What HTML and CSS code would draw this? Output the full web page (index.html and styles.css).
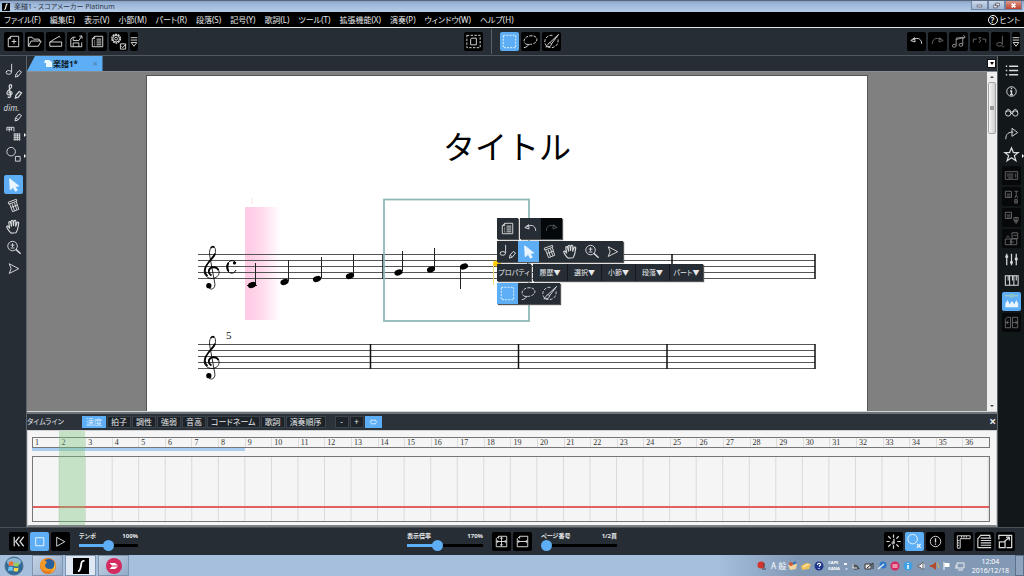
FILE: index.html
```
<!DOCTYPE html>
<html lang="ja">
<head>
<meta charset="UTF-8">
<meta name="viewport" content="width=device-width,initial-scale=1">
<title>楽譜1 - スコアメーカー Platinum</title>
<link rel="stylesheet" href="styles.css">
</head>
<body>
<!-- icon set, 20x20 grid -->
<svg class="defs" aria-hidden="true">
  <symbol id="i-new" viewBox="0 0 20 20"><path d="M7 4.500h8.500v11h-11V7zM7 4.500V7H4.500M10.500 7.500v5M8 10h5"/></symbol>
  <symbol id="i-open" viewBox="0 0 20 20"><path d="M3.500 15V5.500h4l1.500 2h6v2M3.500 15l3-5.500h10.500L14 15z"/></symbol>
  <symbol id="i-scan" viewBox="0 0 20 20"><path d="M4 10.500h12.500v4.500H4zM4 10.500L14 4.500l1 1.500"/></symbol>
  <symbol id="i-save" viewBox="0 0 20 20"><path d="M9 5.500H6l-2 2v8h11.500V11M6.500 15.500v-4h6v4M6.500 6v3h4M10 8.500l2 1 3.500-5M13 4.500l2.500-.5.5 3"/></symbol>
  <symbol id="i-prop" viewBox="0 0 20 20"><path d="M7 4.500h8.500v11h-11V7zM7 4.500V7H4.500M9 7.500h5M9 9.500h5M9 11.500h5M9 13.500h5M6.500 9.500h1M6.500 11.500h1M6.500 13.500h1"/></symbol>
  <symbol id="i-gear" viewBox="0 0 20 20"><circle cx="7.500" cy="7" r="4.500" stroke-dasharray="2 .8" stroke-width="1.500"/><circle cx="7.500" cy="7" r="3.500"/><circle cx="7.500" cy="7" r="1.500"/><path d="M12 12.500h5.500V18H12zM13 15l1.500 1.500 3-3.500"/></symbol>
  <symbol id="i-more" viewBox="0 0 8 20"><path d="M.5 6h7M.5 8.500h7M1 11h6l-3 4z"/></symbol>
  <symbol id="i-all" viewBox="0 0 20 20"><path d="M3 3.500h14v13H3z" stroke-dasharray="2.500 1.500"/><path d="M8 6.500h5v7H7v-6z"/></symbol>
  <symbol id="i-rect" viewBox="0 0 20 20"><path d="M3.500 3.500h13v13h-13z" stroke-dasharray="2 1.300"/></symbol>
  <symbol id="i-lasso" viewBox="0 0 20 20"><path d="M6 13C1 11 3 5 9.500 4c8-1 10 6 3 8.500-3 1-5 .5-6.500.5" stroke-dasharray="3 1.300"/><path d="M8 12.500c0 2-2 3.500-5 4"/></symbol>
  <symbol id="i-pen" viewBox="0 0 20 20"><path d="M11 3.500C6 3 2.500 7 3 11c.5 5 7 7 11 4 3-2 3.500-6 2.500-9" stroke-dasharray="3 1.500"/><path d="M17.500 2.500l-9 8.500 1.500 1.500zM8.500 11c-2 .5-2 3-4.500 4.500 3.500.5 6-.5 6-3"/></symbol>
  <symbol id="i-undo" viewBox="0 0 20 20"><path d="M8 6L4 9l4.500 1.500zM6 8.500c3-3 9.500-2.500 9.500 4"/></symbol>
  <symbol id="i-redo" viewBox="0 0 20 20"><path d="M12 6l4 3-4.500 1.500zM14 8.500c-3-3-9.500-2.500-9.500 4"/></symbol>
  <symbol id="i-notes" viewBox="0 0 20 20"><path d="M7.500 14V6.500l7-1V13M7.500 8l9-2.500M15 3l2 2.500-2.500 1.500"/><ellipse cx="5.500" cy="14.500" rx="2" ry="1.500"/><ellipse cx="12.500" cy="13.500" rx="2" ry="1.500"/></symbol>
  <symbol id="i-tuplet" viewBox="0 0 20 20"><path d="M3.500 11V7.500H7M13 7.500h3.500V11M9 6h2.500L10 8l1.500 1.500L9 11"/></symbol>
  <symbol id="i-note" viewBox="0 0 20 20"><ellipse cx="9" cy="13" rx="3" ry="2"/><path d="M12 13V4M12 15.500h2"/></symbol>
  <symbol id="i-notepen" viewBox="0 0 20 20"><ellipse cx="5" cy="12" rx="2.800" ry="2"/><path d="M8 12V3M12 17l.5-3 3.500-4 2.500 1.500-3.500 4.500zM13 14l2 1.500"/></symbol>
  <symbol id="i-clefpen" viewBox="0 0 20 20"><path d="M4 15.500c1.500 1.500 3.500.5 3-1.500L5.500 5c0-3 3-3 2.500 0-.5 2.500-5.500 4-5 7 .5 2.500 6 2 5.500-.5-.5-2.500-4-1.500-3 .5M12 17l.5-3 3.500-4 2.500 1.500-3.500 4.500z" stroke-width="1.300"/></symbol>
  <symbol id="i-pencil" viewBox="0 0 9 10"><path d="M1 9l.5-3L5 2l2.500 1.500L4 8zM2 6l2 1.500"/></symbol>
  <symbol id="i-text" viewBox="0 0 20 20"><path d="M3 7V3.500h7.500V8M5.500 3.500V8M8 3.500V7M3.500 5.500h5M10 10.500h7M10 12.500h7M10 14.500h7M10 16.500h7M11.500 10v7.500M14 10v7.500M16.500 10v7.500"/></symbol>
  <symbol id="i-shape" viewBox="0 0 20 20"><circle cx="7.500" cy="7" r="4.500"/><path d="M12 12h5v5h-5z"/></symbol>
  <symbol id="i-arrow" viewBox="0 0 20 20"><path d="M6 4l9.500 7.500-4 .5 2.500 4-2 1-2.300-4L6.500 15.500z" fill="currentColor"/></symbol>
  <symbol id="i-erase" viewBox="0 0 20 20"><path d="M4.500 6.500L13 3.500l.5 2L5 8.500zM6 8.500l3 8 6.500-2.500-2.500-8M8.500 8l2.500 7.500M11 7l2.500 7.500M7.500 12l6.500-2.500"/></symbol>
  <symbol id="i-hand" viewBox="0 0 20 20"><path d="M7.500 17C5 15 4 13 3 11c-.5-1.500 1-2 2-.5l1 1.500L5 6c0-1.500 1.500-1.500 2 0l1 4-.5-5.500c0-1.500 2-1.500 2 0l.5 5 .5-5c.2-1.500 2-1.200 2 .2l-.3 5.300 1.500-4c.6-1.300 2-.7 1.800.6-.8 3-.3 7-3 10z" stroke-width="1.200"/></symbol>
  <symbol id="i-zoom" viewBox="0 0 20 20"><circle cx="9" cy="8.500" r="5"/><path d="M12.500 12l5 4.500" stroke-width="1.500"/><path d="M9 5.500v4M7 7.500h4M7 10.500h4"/></symbol>
  <symbol id="i-play" viewBox="0 0 20 20"><path d="M5.500 5l10 5.200-10 5 2-5z"/></symbol>
  <symbol id="i-list" viewBox="0 0 20 20"><path d="M7.500 5.500H17M7.500 10H17M7.500 14.500H17M4 5.500h1.500M4 10h1.500M4 14.500h1.500" stroke-width="1.400"/></symbol>
  <symbol id="i-info" viewBox="0 0 20 20"><circle cx="10" cy="10" r="5"/><path d="M10 6v1.500M8.500 9.500H10V13M8.500 13.500h3" stroke-width="1.500"/></symbol>
  <symbol id="i-glass" viewBox="0 0 20 20"><circle cx="6.500" cy="11" r="2.800"/><circle cx="14" cy="11" r="2.800"/><path d="M4 9.500C5 5.500 8 6 9.500 9.500h2C12 6 15.500 5.500 16.500 9.500M9.300 11h2"/></symbol>
  <symbol id="i-jump" viewBox="0 0 20 20"><path d="M4 16c0-6 3-7.500 8-7.500M10.500 4.500l6 4.500-6 4z"/></symbol>
  <symbol id="i-star" viewBox="0 0 20 20"><path d="M10 3l2 5h5l-4 3.200 1.600 5.300-4.600-3.200-4.600 3.200L7 11.200 3 8h5z" stroke-width="1.300"/></symbol>
  <symbol id="i-kbd" viewBox="0 0 20 20"><path d="M3.500 6h13v8h-13zM5 8.500h7M5 10.500h7M6.500 12.500h5M14.500 8v4"/></symbol>
  <symbol id="i-tab" viewBox="0 0 20 20"><path d="M3.500 4.500h6.500v6.500H3.500zM5 7.500h4M5 9.500h4M13 4.500h4M15 4.500V8M13.500 11.500L15 8.500l1.500 3M13.500 13H16v4h-2.500zM13.500 15H16"/></symbol>
  <symbol id="i-fret" viewBox="0 0 20 20"><path d="M3.500 4.500h6.500v6.500H3.500zM5 7.500h4M5 9.500h4M12.500 10h4.500v3h-4.500zM12.500 14.500H17M14.800 10v7"/></symbol>
  <symbol id="i-parts" viewBox="0 0 20 20"><path d="M3.500 10.500h6v6h-6zM9.500 10.500h6v6h-6zM10.500 4h6v6h-6zM5 9c0-2 2.500-2 2.500 0M8 13.500c2-1.500 3 1.500 4.500 0M12 7c1.500-1.500 2 1 3.500-.5"/></symbol>
  <symbol id="i-mixer" viewBox="0 0 20 20"><path d="M5 4v12M10 4v12M15 4v12" stroke-width="1.300"/><path d="M3.500 7h3M8.500 13h3M13.500 9.500h3" stroke-width="2.500"/></symbol>
  <symbol id="i-piano" viewBox="0 0 20 20"><path d="M3.500 15V5h13.500v10zM6.500 5v5M8 5v5M8 10v5M11 5v5M12.500 5v5M12.500 10v5M15 5v5" stroke-width="1.100"/></symbol>
  <symbol id="i-graph" viewBox="0 0 20 20"><path d="M3.500 16v-4L6 8.500 8 13l2.500-3.500L13 13l2-4.500 2 3.500v4z" fill="currentColor" stroke="none"/><path d="M3 4h5M12 4h5" stroke="#b9d8a0"/><circle cx="10" cy="4" r="1.500" stroke="#b9d8a0"/></symbol>
  <symbol id="i-split" viewBox="0 0 20 20"><path d="M3.500 6.500l2-2H9v11H3.500zM11 4.500h5.500v11H11zM3.500 10h4M11 10h6M6.500 8l-2 2 2 2M14 8l2 2-2 2"/></symbol>
  <symbol id="i-rew" viewBox="0 0 20 20"><path d="M5.500 5v10M11 5l-4 5 4 5M15.500 5l-4 5 4 5" stroke-width="1.300"/></symbol>
  <symbol id="i-stop" viewBox="0 0 20 20"><path d="M6 6h8.500v8.500H6z"/></symbol>
  <symbol id="i-start" viewBox="0 0 20 20"><path d="M6 5.500l8.500 4.700L6 15z"/></symbol>
  <symbol id="i-fitp" viewBox="0 0 20 20"><path d="M7 4.500h8.500v11h-11V7zM7 4.500V7M10 5v10M5 10h10M8.500 7L10 5.500 11.500 7M8.500 13l1.500 1.500 1.500-1.500M6.500 8.500L5 10l1.500 1.500M13.500 8.500L15 10l-1.500 1.500"/></symbol>
  <symbol id="i-fitw" viewBox="0 0 20 20"><path d="M7 4.500h8.500v11h-11V7zM7 4.500V7M5 10h10M6.500 8.500L5 10l1.500 1.500M13.500 8.500L15 10l-1.500 1.500"/></symbol>
  <symbol id="i-flash" viewBox="0 0 20 20"><path d="M10 2.500V6M10 14v3.500M2.500 10H6M14 10h3.500M4.500 4.500L7 7M13 13l2.500 2.500M15.500 4.500L13 7M4.500 15.500L7 13M10.500 7v5" stroke-width="1.300"/><circle cx="9.500" cy="11.500" r="1.200"/></symbol>
  <symbol id="i-ox" viewBox="0 0 20 20"><circle cx="8" cy="7.500" r="5"/><path d="M12.500 12.500l4 4M16.500 12.500l-4 4" stroke-width="1.400"/></symbol>
  <symbol id="i-warn" viewBox="0 0 20 20"><circle cx="10" cy="10" r="5.500"/><path d="M10 6.500V11M10 12v1.500" stroke-width="1.400"/></symbol>
  <symbol id="i-ruler" viewBox="0 0 20 20"><path d="M3.500 17V4H17v3H6.500v10zM8 4v2M10.500 4v2M13 4v2M3.500 9h2M3.500 11.500h2M3.500 14h2"/></symbol>
  <symbol id="i-lines" viewBox="0 0 20 20"><path d="M3 16.500V7l3-3.500h9.500v2M3 16.500h14M6 6.500h11M6 9h11M6 11.500h11M6 14h11" stroke-width="1.200"/></symbol>
  <symbol id="i-full" viewBox="0 0 20 20"><path d="M3 8V3.500h13.500v13H11M3.500 10.500h6v6h-6zM9 10l5-4.500M10.500 5.500H14V9" stroke-width="1.300"/></symbol>
  <symbol id="clef" viewBox="44 164 50 136"><path d="M58 288c2 13 24 13 21-8L64 198c-3-15 1-29 10-29 8 0 9 16 4 28-8 16-31 26-31 46 0 15 11 22 23 22 14 0 22-9 22-19 0-9-7-16-16-16-10 0-16 6-16 14 0 6 3 10 8 12" stroke-width="2.500"/><path d="M80 190c-8 16-31 32-31 51 0 8 3 13 8 17M90 240c-4-11-28-13-29 4 0 6 3 9 8 12M67 174c2-6 7-6 10-3" stroke-width="5"/><circle cx="61" cy="287" r="8" fill="currentColor" stroke="none"/></symbol>
</svg>

<header class="titlebar">
  <svg class="app-icon" viewBox="0 0 10 10"><rect width="10" height="10" fill="#000"/><path d="M7 1.500C4 1 6 7 3 8.500" stroke="#fff" stroke-width="1.500"/></svg>
  <span class="title-text">楽譜1 - スコアメーカー Platinum</span>
  <div class="win-buttons">
    <button type="button" aria-label="最小化"><svg viewBox="0 0 16 9"><path d="M5.500 4h5v2h-5z" fill="#fff" stroke="#667"/></svg></button>
    <button type="button" aria-label="元に戻す"><svg viewBox="0 0 16 9"><path d="M7 2h4v3H7zM5 4h4v3H5z" fill="#fff" stroke="#667"/></svg></button>
    <button type="button" class="close" aria-label="閉じる"><svg viewBox="0 0 16 9"><path d="M6 2.500l4 4M10 2.500l-4 4" stroke="#fff" stroke-width="1.800"/></svg></button>
  </div>
</header>

<nav class="menubar">
  <a href="#">ファイル(F)</a><a href="#">編集(E)</a><a href="#">表示(V)</a><a href="#">小節(M)</a><a href="#">パート(R)</a><a href="#">段落(S)</a><a href="#">記号(Y)</a><a href="#">歌詞(L)</a><a href="#">ツール(T)</a><a href="#">拡張機能(X)</a><a href="#">演奏(P)</a><a href="#">ウィンドウ(W)</a><a href="#">ヘルプ(H)</a>
  <a class="hint" href="#"><span class="hint-mark">?</span>ヒント</a>
</nav>

<div class="toolbar">
  <div class="tools">
    <button type="button" class="btn" aria-label="新規"><svg><use href="#i-new"/></svg></button>
    <button type="button" class="btn" aria-label="開く"><svg><use href="#i-open"/></svg></button>
    <button type="button" class="btn" aria-label="スキャナ"><svg><use href="#i-scan"/></svg></button>
    <button type="button" class="btn" aria-label="保存"><svg><use href="#i-save"/></svg></button>
    <button type="button" class="btn" aria-label="プロパティ"><svg><use href="#i-prop"/></svg></button>
    <button type="button" class="btn" aria-label="設定"><svg><use href="#i-gear"/></svg></button>
    <button type="button" class="btn thin" aria-label="その他"><svg><use href="#i-more"/></svg></button>
  </div>
  <div class="tools">
    <button type="button" class="btn" aria-label="すべて選択"><svg><use href="#i-all"/></svg></button>
    <span class="divider"></span>
    <button type="button" class="btn on" aria-label="矩形選択"><svg><use href="#i-rect"/></svg></button>
    <button type="button" class="btn" aria-label="投げなわ"><svg><use href="#i-lasso"/></svg></button>
    <button type="button" class="btn" aria-label="ペン選択"><svg><use href="#i-pen"/></svg></button>
  </div>
  <div class="tools end">
    <button type="button" class="btn" aria-label="元に戻す"><svg><use href="#i-undo"/></svg></button>
    <button type="button" class="btn off" aria-label="やり直し"><svg><use href="#i-redo"/></svg></button>
    <button type="button" class="btn off mid" aria-label="移調"><svg><use href="#i-notes"/></svg></button>
    <button type="button" class="btn off" aria-label="連符"><svg><use href="#i-tuplet"/></svg></button>
    <button type="button" class="btn off" aria-label="付点"><svg><use href="#i-note"/></svg></button>
    <button type="button" class="btn thin" aria-label="その他"><svg><use href="#i-more"/></svg></button>
  </div>
</div>

<div class="workspace">
  <aside class="side left">
    <button type="button" class="btn" aria-label="音符入力"><svg><use href="#i-notepen"/></svg></button>
    <button type="button" class="btn" aria-label="記号入力"><svg><use href="#i-clefpen"/></svg></button>
    <button type="button" class="btn dim"><span>dim.</span><svg><use href="#i-pencil"/></svg></button>
    <button type="button" class="btn sub" aria-label="文字入力"><svg><use href="#i-text"/></svg></button>
    <button type="button" class="btn sub" aria-label="図形"><svg><use href="#i-shape"/></svg></button>
    <button type="button" class="btn on apart" aria-label="選択"><svg><use href="#i-arrow"/></svg></button>
    <button type="button" class="btn" aria-label="消しゴム"><svg><use href="#i-erase"/></svg></button>
    <button type="button" class="btn" aria-label="手のひら"><svg><use href="#i-hand"/></svg></button>
    <button type="button" class="btn" aria-label="拡大"><svg><use href="#i-zoom"/></svg></button>
    <button type="button" class="btn" aria-label="再生"><svg><use href="#i-play"/></svg></button>
  </aside>

  <main class="center">
    <div class="doc-tabs">
      <a class="doc-tab" href="#"><svg viewBox="0 0 9 9"><path d="M1 1h4l3 2v5H2V4H0z" fill="#e9f7ff"/></svg><b>楽譜1*</b><span>×</span></a>
      <button type="button" class="tab-list" aria-label="タブ一覧"></button>
    </div>
    <div class="doc">
      <div class="view">
        <article class="page">
          <h1>タイトル</h1>
          <svg class="score" viewBox="0 0 720 222">
            <defs><linearGradient id="pink"><stop offset=".1" stop-color="#ffcbe5"/><stop offset=".5" stop-color="#ffdcee"/><stop offset="1" stop-color="#fff"/></linearGradient></defs>
            <text x="103" y="14" class="faint">1</text>
            <rect x="98" y="17" width="36" height="113" fill="url(#pink)"/>
            <path class="staff" d="M51 64.500h617M51 70.500h617M51 76.500h617M51 82.500h617M51 88.500h617M51 154.500h617M51 160.500h617M51 166.500h617M51 172.500h617M51 178.500h617"/>
            <path class="bars" d="M236 64v25M381 64v25M525 64v25M668 64v25M223.500 154v25M371.500 154v25M520 154v25M668 154v25"/>
            <use href="#clef" x="56" y="55" width="17" height="45"/>
            <use href="#clef" x="56" y="145" width="17" height="45"/>
            <path d="M89 73c-2-4-9-3-9 4s7 8 9 3" stroke="#000"/>
            <path d="M81.500 73c-1.500 2-1.500 6 0 8" stroke="#000" stroke-width="2"/>
            <circle cx="87.500" cy="73" r="1.600" fill="#000"/>
            <text x="79" y="149" class="measure-no">5</text>
            <path class="stem" d="M100 95.500h10M108.500 94V73M141.500 91V70M174.500 88V67M206.500 85V64M255.500 81V61M287.500 78V58M313.500 77v22"/>
            <g fill="#000">
              <ellipse cx="105" cy="95" rx="4.200" ry="2.900" transform="rotate(-20 105 95)"/>
              <ellipse cx="137.500" cy="92" rx="4.200" ry="2.900" transform="rotate(-20 137.500 92)"/>
              <ellipse cx="170" cy="89" rx="4.200" ry="2.900" transform="rotate(-20 170 89)"/>
              <ellipse cx="203" cy="86" rx="4.200" ry="2.900" transform="rotate(-20 203 86)"/>
              <ellipse cx="251.500" cy="82.500" rx="4.200" ry="2.900" transform="rotate(-20 251.500 82.500)"/>
              <ellipse cx="284" cy="79.500" rx="4.200" ry="2.900" transform="rotate(-20 284 79.500)"/>
              <ellipse cx="317" cy="76.500" rx="4.200" ry="2.900" transform="rotate(-20 317 76.500)"/>
            </g>
            <path d="M346.500 74v21" stroke="#f3dc7a"/>
            <ellipse cx="350" cy="73.500" rx="4" ry="3" fill="#ffcd00"/>
            <rect x="237" y="9.500" width="145" height="121.500" stroke="#8fb9b9" stroke-width="1.800"/>
          </svg>

          <!-- floating palette -->
          <div class="palette">
            <div class="pal-row">
              <div class="pal"><button type="button" class="btn" aria-label="プロパティ"><svg><use href="#i-prop"/></svg></button></div>
              <div class="pal"><button type="button" class="btn" aria-label="元に戻す"><svg><use href="#i-undo"/></svg></button><button type="button" class="btn black" aria-label="やり直し"><svg><use href="#i-redo"/></svg></button></div>
            </div>
            <div class="pal-row">
              <div class="pal">
                <button type="button" class="btn" aria-label="音符入力"><svg><use href="#i-notepen"/></svg></button><button type="button" class="btn on" aria-label="選択"><svg><use href="#i-arrow"/></svg></button><button type="button" class="btn" aria-label="消しゴム"><svg><use href="#i-erase"/></svg></button><button type="button" class="btn" aria-label="手のひら"><svg><use href="#i-hand"/></svg></button><button type="button" class="btn" aria-label="拡大"><svg><use href="#i-zoom"/></svg></button><button type="button" class="btn" aria-label="再生"><svg><use href="#i-play"/></svg></button>
              </div>
            </div>
            <div class="pal-row">
              <div class="pal"><button type="button" class="word">プロパティ</button></div>
              <div class="pal words"><button type="button" class="word">履歴▼</button><button type="button" class="word">選択▼</button><button type="button" class="word">小節▼</button><button type="button" class="word">段落▼</button><button type="button" class="word">パート▼</button></div>
            </div>
            <div class="pal-row">
              <div class="pal"><button type="button" class="btn on" aria-label="矩形選択"><svg><use href="#i-rect"/></svg></button><button type="button" class="btn" aria-label="投げなわ"><svg><use href="#i-lasso"/></svg></button><button type="button" class="btn" aria-label="ペン選択"><svg><use href="#i-pen"/></svg></button></div>
            </div>
          </div>
        </article>
      </div>
      <div class="scroll"><i class="up"></i><i class="thumb"></i><i class="down"></i></div>
    </div>

    <section class="timeline">
      <div class="tl-head">
        <span class="tl-title">タイムライン</span>
        <button type="button" class="on">速度</button><button type="button">拍子</button><button type="button">調性</button><button type="button">強弱</button><button type="button">音高</button><button type="button">コードネーム</button><button type="button">歌詞</button><button type="button">演奏順序</button>
        <button type="button" class="zoom first">-</button><button type="button" class="zoom">+</button><button type="button" class="zoom on">⇔</button>
        <button type="button" class="tl-close" aria-label="閉じる">×</button>
      </div>
      <div class="tl-body">
        <div class="tracks">
          <div class="now"></div>
          <div class="ruler"><span>1</span><span>2</span><span>3</span><span>4</span><span>5</span><span>6</span><span>7</span><span>8</span><span>9</span><span>10</span><span>11</span><span>12</span><span>13</span><span>14</span><span>15</span><span>16</span><span>17</span><span>18</span><span>19</span><span>20</span><span>21</span><span>22</span><span>23</span><span>24</span><span>25</span><span>26</span><span>27</span><span>28</span><span>29</span><span>30</span><span>31</span><span>32</span><span>33</span><span>34</span><span>35</span><span>36</span></div>
          <div class="range"></div>
          <div class="chart"><div class="tempo-line"></div></div>
        </div>
      </div>
    </section>
  </main>

  <aside class="side right">
    <button type="button" class="btn" aria-label="一覧"><svg><use href="#i-list"/></svg></button>
    <button type="button" class="btn" aria-label="情報"><svg><use href="#i-info"/></svg></button>
    <button type="button" class="btn" aria-label="検索"><svg><use href="#i-glass"/></svg></button>
    <button type="button" class="btn" aria-label="ジャンプ"><svg><use href="#i-jump"/></svg></button>
    <button type="button" class="btn sub" aria-label="お気に入り"><svg><use href="#i-star"/></svg></button>
    <button type="button" class="btn off" aria-label="キーボード"><svg><use href="#i-kbd"/></svg></button>
    <button type="button" class="btn off" aria-label="タブ譜"><svg><use href="#i-tab"/></svg></button>
    <button type="button" class="btn off" aria-label="ダイアグラム"><svg><use href="#i-fret"/></svg></button>
    <button type="button" class="btn off" aria-label="パート"><svg><use href="#i-parts"/></svg></button>
    <button type="button" class="btn" aria-label="ミキサー"><svg><use href="#i-mixer"/></svg></button>
    <button type="button" class="btn" aria-label="鍵盤"><svg><use href="#i-piano"/></svg></button>
    <button type="button" class="btn on" aria-label="タイムライン"><svg><use href="#i-graph"/></svg></button>
    <button type="button" class="btn off" aria-label="対照"><svg><use href="#i-split"/></svg></button>
  </aside>
</div>

<div class="transport">
  <div class="tools">
    <button type="button" class="btn" aria-label="先頭へ"><svg><use href="#i-rew"/></svg></button>
    <button type="button" class="btn on" aria-label="停止"><svg><use href="#i-stop"/></svg></button>
    <button type="button" class="btn" aria-label="再生"><svg><use href="#i-start"/></svg></button>
    <div class="slider short"><label for="tempo">テンポ</label><output for="tempo">100%</output><input id="tempo" type="range" value="50" style="--fill:50%"></div>
  </div>
  <div class="tools">
    <div class="slider"><label for="zoom">表示倍率</label><output for="zoom">170%</output><input id="zoom" type="range" value="38" style="--fill:38%"></div>
    <button type="button" class="btn" aria-label="全体表示"><svg><use href="#i-fitp"/></svg></button>
    <button type="button" class="btn" aria-label="幅に合わせる"><svg><use href="#i-fitw"/></svg></button>
    <div class="slider"><label for="pageno">ページ番号</label><output for="pageno">1/2頁</output><input id="pageno" type="range" value="0" style="--fill:0%"></div>
  </div>
  <div class="tools end">
    <button type="button" class="btn" aria-label="点滅"><svg><use href="#i-flash"/></svg></button>
    <button type="button" class="btn on" aria-label="正誤"><svg><use href="#i-ox"/></svg></button>
    <button type="button" class="btn" aria-label="警告"><svg><use href="#i-warn"/></svg></button>
    <span class="space"></span>
    <button type="button" class="btn" aria-label="定規"><svg><use href="#i-ruler"/></svg></button>
    <button type="button" class="btn" aria-label="五線"><svg><use href="#i-lines"/></svg></button>
    <button type="button" class="btn" aria-label="全画面"><svg><use href="#i-full"/></svg></button>
  </div>
</div>

<footer class="taskbar">
  <button type="button" class="start" aria-label="スタート"><svg viewBox="0 0 20 20"><circle cx="10" cy="10" r="9" fill="#2f6c98" stroke="#52708d"/><ellipse cx="10" cy="6" rx="7" ry="4" fill="#8fb9d2"/><path d="M5 6q2-1.500 4.500 0l-.5 4q-2.500-1-4.500 0z" fill="#f0713a"/><path d="M10.500 6.500q2.500 1 4.500-.5l-.5 4q-2 1-4.500 0z" fill="#9bcf52"/><path d="M4.500 11q2-1 4.500 0l-.5 4Q6 14 4 15z" fill="#6cc3f2"/><path d="M10 11.500q2 1 4.500 0l-.5 3.500q-2 1-4.500 0z" fill="#fbd84b"/></svg></button>
  <button type="button" class="task" aria-label="Firefox"><svg viewBox="0 0 18 18"><circle cx="9" cy="9" r="8" fill="#e4761b"/><circle cx="10" cy="7.500" r="5.500" fill="#27629f"/><path d="M1.500 6c1-3 3-4 3.500-4 0 2 2 2 3 3-1 2-2 2-2 4 1 3 5 4 8 2-1 4-9 5-12 0-1-2-1-4-.5-5z" fill="#f39a27"/><path d="M16 5c1.500 5-1 10-5.500 11 3-2 5-6 5.500-11z" fill="#ffcf45"/></svg></button>
  <button type="button" class="task active" aria-label="スコアメーカー"><svg viewBox="0 0 18 18"><rect x="1" y="1" width="16" height="16" fill="#000"/><path d="M12.500 4C7 2.500 11 13 6 14.500" stroke="#fff" stroke-width="1.800"/></svg></button>
  <button type="button" class="task" aria-label="録画"><svg viewBox="0 0 18 18"><circle cx="9" cy="9" r="8" fill="#d52a60"/><path d="M4.500 6h5.500l3 2.500H7zM4.500 12h5.500l3-2.500H7z" fill="#fff"/></svg></button>
  <div class="tray">
    <svg viewBox="0 0 12 12"><circle cx="5" cy="5" r="3.500" fill="#d2342f"/><path d="M8 3v5M6 9h4" stroke="#444"/></svg>
    <span class="ime">A 般</span>
    <svg viewBox="0 0 12 12"><path d="M1 5l9-1-1 5-6 1z" fill="#efd5a0"/><circle cx="4" cy="4" r="2" fill="#cc5a3b"/><path d="M6 4l3-2" stroke="#356bb0" stroke-width="2"/></svg>
    <svg viewBox="0 0 12 12"><path d="M1 6l5-3 5 1-2 5-7 1z" fill="#eec15c"/><path d="M3 7l6-3" stroke="#fff4ce"/></svg>
    <svg viewBox="0 0 12 12"><circle cx="6" cy="6" r="4.500" fill="#20358c"/><path d="M4.500 5c0-2.500 3.500-2 3 0L6 6.500M6 8v1" stroke="#fff" stroke-width="1.200"/></svg>
    <span class="caps">CAPS<br>KANA</span>
    <svg class="narrow" viewBox="0 0 6 12"><path d="M1 3h3v2H1zM2 8.500h3L3.500 10z" fill="#eef"/></svg>
    <svg viewBox="0 0 12 12"><path d="M2 4l5 1 3 4-6 1z" fill="#4b5258"/><path d="M3 4v4h4" stroke="#eee"/></svg>
    <svg viewBox="0 0 12 12"><path d="M2 4h6v5H2z" fill="#e8e8e8" stroke="#333"/><path d="M4 8l6-5v6" stroke="#333"/></svg>
    <svg viewBox="0 0 12 12"><circle cx="7" cy="5" r="3.500" fill="#2d75c9"/><path d="M2 9l6-5" stroke="#dfeeff" stroke-width="1.500"/></svg>
    <svg viewBox="0 0 12 12"><circle cx="6" cy="6" r="4.500" fill="#d52a60"/><path d="M3.500 5h5M3.500 7h5" stroke="#fff"/></svg>
    <svg viewBox="0 0 12 12"><circle cx="6" cy="6" r="4.500" fill="#3da0e4"/><path d="M6 3v1M6 5v4" stroke="#fff" stroke-width="1.500"/></svg>
    <svg viewBox="0 0 12 12"><path d="M3 5h2l3-3v8L5 7H3z" fill="#f2f2f2" stroke="#666"/><path d="M9 4v4" stroke="#eee"/></svg>
    <svg viewBox="0 0 12 12"><path d="M2 5h2l4-3v8L4 7H2z" fill="#b5492e"/><path d="M9 3l2 5" stroke="#e3b04b"/></svg>
    <svg viewBox="0 0 12 12"><path d="M3 2v8" stroke="#fff"/><path d="M3.500 3h5v4h-5z" fill="#fff"/></svg>
    <svg viewBox="0 0 12 12"><path d="M3 3h7v5H3zM4 10h5M2 5v4" stroke="#eee"/></svg>
    <div class="clock">12:04<br>2016/12/18</div>
    <button type="button" class="desktop" aria-label="デスクトップの表示"></button>
  </div>
</footer>
</body>
</html>
```

FILE: styles.css
```
*{box-sizing:border-box;}
body{margin:0;height:100vh;display:flex;flex-direction:column;overflow:hidden;background:#262d34;color:#e6e8ea;font-family:"Noto Sans","Noto Sans CJK JP",sans-serif;font-size:8px;line-height:12px;font-feature-settings:"palt";}
button{margin:0;padding:0;border:0;background:none;color:inherit;font:inherit;font-feature-settings:inherit;display:flex;align-items:center;justify-content:center;}
a{color:inherit;text-decoration:none;}
svg{fill:none;display:block;}
.defs{position:absolute;width:0;height:0;}

.titlebar{display:flex;align-items:center;gap:4px;height:12px;padding-left:2px;background:linear-gradient(#8aa3c4,#9db8da 30%,#b5cbe6);border-top:1px solid #56647c;color:#2d3748;font-size:7px;}
.app-icon{width:8px;height:8px;}
.win-buttons{display:flex;margin-left:auto;padding-right:2px;align-self:flex-start;}
.win-buttons button{width:17px;height:9px;background:linear-gradient(#c9d8ea,#9fb6d3);border:1px solid #7186a5;border-top:0;}
.win-buttons svg{width:16px;height:9px;}
.win-buttons .close{background:linear-gradient(#dc9a8c,#c0402d);}

.menubar{display:flex;align-items:center;gap:9px;height:16px;padding:0 4px;background:#000;border-bottom:1px solid #e4e4e4;white-space:nowrap;}
.hint{display:flex;align-items:center;gap:2px;margin-left:auto;}
.hint-mark{width:10px;height:10px;border:1px solid #fff;border-radius:50%;line-height:8px;text-align:center;font-weight:bold;}

.toolbar{display:grid;grid-template-columns:1fr auto 1fr;align-items:center;height:28px;padding:0 4px;border-bottom:1px solid #50575e;}
.tools{display:flex;align-items:center;gap:2px;}
.end{justify-content:flex-end;}
.btn{width:19px;height:19px;flex:none;background:#000;border-radius:2px;color:#d8dadc;position:relative;}
.btn svg{width:19px;height:19px;stroke:currentColor;}
.btn.on{background:#5eaef5;color:#eaf5ff;}
.btn.off{color:#666;}
.btn.mid{color:#999;}
.btn.thin,.btn.thin svg{width:8px;}
.divider{width:1px;height:25px;margin:0 6px;background:#5b6268;}

.workspace{flex:1;display:flex;min-height:0;}
.side{flex:none;width:26px;display:flex;flex-direction:column;align-items:center;gap:2px;padding-top:5px;}
.left .btn{background:none;}
.left .btn.on{background:#5eaef5;}
.left .apart{margin-top:9px;}
.right{background:#12171a;}
.right .btn{background:none;}
.right .btn.off{background:#06080a;}
.right .btn.on{background:#5eaef5;}
.sub::after{content:"";position:absolute;right:-3px;top:9px;border:2px solid transparent;border-left-color:#fff;border-right:0;}
.dim{flex-direction:column;align-items:flex-start;}
.dim span{font-style:italic;line-height:8px;}
.btn.dim svg{width:9px;height:10px;align-self:flex-end;}

.center{flex:1;min-width:0;display:flex;flex-direction:column;border:solid #5d646a;border-width:0 1px;}
.doc-tabs{display:flex;align-items:center;justify-content:space-between;height:16px;border-bottom:1px solid #8b8f92;background:#262d34;}
.doc-tab{display:flex;align-items:center;height:15px;padding:0 5px 0 17px;background:#5eaef5;color:#0c1a28;clip-path:polygon(8px 0,100% 0,100% 100%,0 100%);}
.doc-tab svg{width:9px;height:9px;}
.doc-tab span{margin-left:15px;color:#4a7aa8;}
.tab-list{width:9px;height:9px;margin-right:1px;background:#fff;border:1px solid #111;}
.tab-list::after{content:"";border:2px solid transparent;border-top:3px solid #000;border-bottom:0;}
.doc{flex:1;min-height:0;display:flex;border-bottom:1px solid #d5d5d5;}
.view{flex:1;overflow:hidden;padding-top:4px;background:#808080;}
.page{position:relative;width:75%;min-height:100%;margin:0 auto;background:#fff;outline:1px solid #555;color:#000;}
.page h1{margin:0;padding-top:47px;height:114px;font-size:32px;line-height:48px;font-weight:400;text-align:center;font-feature-settings:normal;}
.score{width:100%;}
.staff{stroke:#555;stroke-width:1;}
.bars{stroke:#111;stroke-width:1.5;}
.stem{stroke:#222;stroke-width:1;}
.score use{stroke:#000;color:#000;}
.score text{font-family:"Liberation Serif",serif;font-size:11px;fill:#111;}
.score .faint{font-size:8px;fill:#fbd9ea;}
.scroll{width:10px;display:flex;flex-direction:column;align-items:center;background:#efefef;}
.scroll i{display:block;}
.up{margin:4px 0;border:2px solid transparent;border-bottom:2px solid #444;border-top:0;}
.thumb{width:8px;height:52px;border:1px solid #a5a5a5;border-radius:2px;background:linear-gradient(#999,#999) center/4px 4px no-repeat,linear-gradient(90deg,#f7f7f7,#cfcfcf);}
.down{margin:auto 0 4px;border:2px solid transparent;border-top:2px solid #444;border-bottom:0;}

.palette{position:absolute;left:350px;top:142px;display:flex;flex-direction:column;gap:2px;color:#e6e8ea;}
.pal-row{display:flex;gap:2px;}
.pal{display:flex;background:#262d34;box-shadow:1px 1px 1px #555;}
.pal .btn{width:21px;height:21px;background:none;border-radius:0;}
.pal .btn.on{background:#5eaef5;}
.pal .btn.black{background:#04080b;color:#4d5255;}
.word{height:17px;width:34px;white-space:nowrap;font-size:7px;}
.words .word+.word{border-left:1px solid #14191d;}

.timeline{border-top:2px solid #6e7478;}
.tl-head{display:flex;align-items:center;gap:1px;height:16px;background:#2b323a;}
.tl-title{width:54px;font-size:7px;}
.tl-head button{height:12px;padding:0 3px;border:1px solid #3c444b;background:#1d2329;}
.tl-head .on{background:#5eaef5;border-color:#5eaef5;color:#d9edff;}
.tl-head .zoom{width:14px;}
.tl-head .zoom.on{width:17px;}
.tl-head .first{margin-left:8px;}
.tl-head .tl-close{margin-left:auto;border:0;background:none;font-size:12px;font-weight:bold;padding:0 1px;}
.tl-body{padding-right:6px;padding-left:4px;background:#f5f5f5;border:1px solid #cfd1d2;border-bottom:2px solid #7b8083;}
.tracks{position:relative;padding:6px 0 3px;}
.ruler{display:flex;height:11px;border:1px solid #777;color:#333;font:8px/10px "Liberation Serif",serif;}
.ruler span{flex:1 1 0;padding-left:2px;}
.ruler span+span{border-left:1px solid #ddd;}
.range{width:calc(800%/36);height:3px;background:#a9cdee;}
.chart{height:66px;margin-top:5px;padding-top:49px;border:1px solid #777;background:linear-gradient(90deg,#d9d9d9 1px,transparent 1px) -1px 0/calc(100%/36) 100%;}
.tempo-line{height:2px;background:#e0605f;}
.now{position:absolute;left:calc(100%/36);width:calc(100%/36);top:0;bottom:0;background:rgba(120,195,120,.38);}

.transport{display:grid;grid-template-columns:1fr auto 1fr;align-items:center;height:28px;padding:0 9px;border-top:1px solid #4a5157;}
.slider{display:grid;grid-template-columns:1fr auto;width:76px;margin:0 7px;font-size:6px;line-height:8px;font-weight:bold;}
.slider.short{width:59px;}
.slider input{grid-column:span 2;appearance:none;width:100%;height:12px;margin:0;background:linear-gradient(90deg,#5eaef5 var(--fill),#000 var(--fill)) center/100% 3px no-repeat;}
.slider input::-webkit-slider-thumb{appearance:none;width:11px;height:11px;border-radius:50%;background:#5eaef5;}
.space{width:5px;}

.taskbar{display:flex;height:21px;gap:2px;padding-left:4px;background:linear-gradient(90deg,#a5bfdd 70%,#8299b5 78%);}
.start svg{width:20px;height:20px;}
.start{margin-right:6px;}
.task{width:31px;border:1px solid #7f96b2;background:linear-gradient(135deg,#c4d3e4,#93aac7);}
.task svg{width:18px;height:18px;}
.task.active{background:#dfe8f2;}
.tray{display:flex;align-items:center;gap:1px;margin-left:auto;color:#fff;}
.tray svg{width:12px;height:12px;}
.tray .narrow{width:6px;}
.ime{padding-left:2px;}
.caps{font-size:4px;line-height:6px;font-weight:bold;margin:0 2px;}
.clock{margin:0 5px;font-size:7px;line-height:9px;text-align:center;}
.desktop{width:9px;height:100%;border:1px solid #5c708a;background:#8ea3bd;}
```
